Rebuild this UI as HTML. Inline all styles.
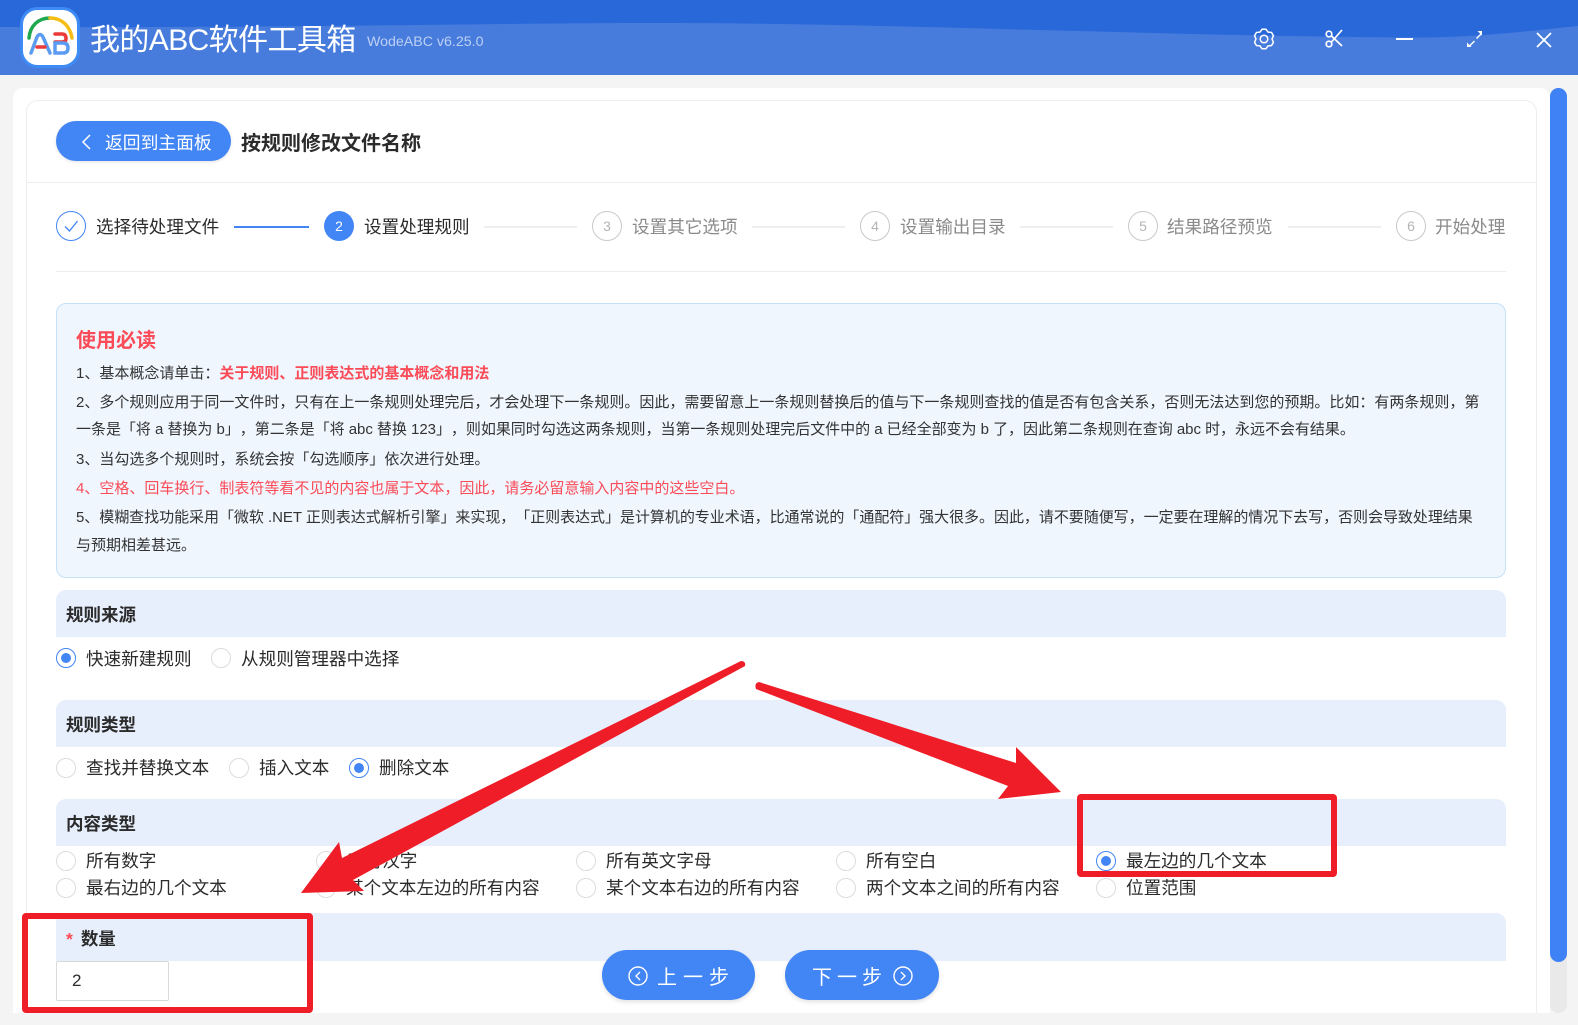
<!DOCTYPE html>
<html lang="zh"><head><meta charset="utf-8"><style>
*{box-sizing:border-box;margin:0;padding:0}
html,body{width:1578px;height:1025px;overflow:hidden;background:#f4f4f4;font-family:"Liberation Sans","Noto Sans CJK SC",sans-serif;color:#2b2b2b;text-spacing-trim:space-all}
.a{position:absolute;white-space:nowrap}
.t{position:absolute;white-space:nowrap;line-height:24px;height:24px}
.s{font-size:17.6px}
.n{font-size:15px;color:#333}
.g{color:#8a8a8a}
.r{position:absolute;width:20px;height:20px;border-radius:50%;border:1px solid #dcdcdc;background:#fff}
.r.on{border:1px solid #4285f4}
.r.on:after{content:"";position:absolute;left:4px;top:4px;width:10px;height:10px;border-radius:50%;background:#4285f4}
.bar{position:absolute;left:56px;width:1450px;background:#e7effc;border-radius:10px 10px 0 0}
.bt{position:absolute;left:66px;font-size:17.5px;font-weight:700;line-height:24px;white-space:nowrap;color:#2b2b2b}
.c{position:absolute;top:211px;width:30px;height:30px;border-radius:50%;border:1px solid #c9c9c9;color:#b5b5b5;font-size:14px;line-height:28px;text-align:center}
.l{position:absolute;top:226px;height:2px;width:93px;background:#eeeeee}
.btn{position:absolute;top:950px;height:50px;border-radius:25px;background:#4285f4;color:#fff;box-shadow:0 2px 4px rgba(0,0,0,.12)}
</style></head><body>
<svg class="a" style="left:0;top:0" width="1578" height="75" viewBox="0 0 1578 75"><rect width="1578" height="75" fill="#487cdc"/><path d="M0 0H1578V26C1520 32 1470 38 1400 37.500C1300 37 1150 33 1000 29C850 25 760 23 650 23C500 23 300 28 0 27Z" fill="#2968d8"/></svg>
<svg class="a" style="left:20px;top:7px" width="60" height="62" viewBox="0 0 60 62">
<rect x="1.500" y="1.500" width="57" height="58" rx="16" fill="#fff" stroke="#3f8bf5" stroke-width="3"/>
<path d="M9 31C10 19 18 11 30 11" fill="none" stroke="#1fa84f" stroke-width="3.500" stroke-linecap="round"/>
<path d="M30 11C42 11 50 19 52 31" fill="none" stroke="#f6bd16" stroke-width="3.500" stroke-linecap="round"/>
<path d="M11 46L17 30Q20 25 23 30L30 46" fill="none" stroke="#5b9bf2" stroke-width="3.500" stroke-linecap="round"/>
<path d="M17 40H25" stroke="#ea3a3a" stroke-width="3.500" stroke-linecap="round"/>
<path d="M35 27H42Q46 27 46 31.500Q46 35 42 35H35" fill="none" stroke="#ea3a3a" stroke-width="3.500" stroke-linecap="round"/>
<path d="M35 36H43Q48 36 48 41Q48 46 43 46H35Z" fill="none" stroke="#5b9bf2" stroke-width="3.500" stroke-linecap="round"/>
</svg>
<div class="a" style="left:90px;top:19px;font-size:30px;line-height:44px;color:#fff;letter-spacing:-.6px">我的ABC软件工具箱</div>
<div class="a" style="left:367px;top:32px;font-size:14.200px;line-height:20px;color:#bcd0f3">WodeABC v6.25.0</div>
<svg class="a" style="left:1249px;top:24px" width="30" height="30" viewBox="0 0 30 30" fill="none" stroke="#fff" stroke-width="1.500" stroke-linejoin="round"><path d="M13.100 5.200H16.900L19 8.070L22.550 8.440L24.450 11.740L23 15L24.450 18.260L22.550 21.560L19 21.930L16.900 24.800H13.100L11 21.930L7.450 21.560L5.550 18.260L7 15L5.550 11.740L7.450 8.440L11 8.070Z"/><circle cx="15" cy="15" r="3.800"/></svg>
<svg class="a" style="left:1320px;top:24px" width="30" height="30" viewBox="0 0 30 30" fill="none" stroke="#fff" stroke-width="1.700"><circle cx="9" cy="10" r="2.800"/><circle cx="9" cy="20" r="2.800"/><path d="M11.500 12L22 22M11.500 18L22 6"/></svg>
<div class="a" style="left:1396px;top:38px;width:17px;height:2px;background:#fff"></div>
<svg class="a" style="left:1460px;top:24px" width="30" height="30" viewBox="0 0 30 30" fill="#fff"><path d="M8.500 22L14 16.500L15 17.500L9.500 23Z M16 14L21 9L22 10L17 15Z M7 23V18.500L11.500 23Z M22 7V11.500L17.500 7Z"/></svg>
<svg class="a" style="left:1529px;top:24px" width="30" height="30" viewBox="0 0 30 30" stroke="#fff" stroke-width="1.800"><path d="M8 9L22 23M22 9L8 23"/></svg>

<div class="a" style="left:13px;top:88px;width:1537px;height:925px;background:#fff;border-radius:10px 10px 0 0;overflow:hidden"><div class="a" style="left:13px;top:12px;width:1511px;height:960px;background:#fff;border:1px solid #eeeeee;border-radius:12px"></div></div>
<div class="a" style="left:1550px;top:88px;width:17px;height:925px;background:#e9e9e9;border-radius:9px"></div>
<div class="a" style="left:1550px;top:88px;width:17px;height:874px;background:#3e82f5;border-radius:9px"></div>

<div class="btn" style="left:56px;top:121px;width:175px;height:40px;border-radius:20px;box-shadow:0 1px 3px rgba(0,0,0,.12)"></div>
<svg class="a" style="left:77px;top:131px" width="20" height="20" fill="none" stroke="#fff" stroke-width="1.500"><path d="M13 4L6 11L13 18"/></svg>
<div class="t" style="left:105px;top:131px;font-size:17.800px;color:#fff">返回到主面板</div>
<div class="t" style="left:241px;top:132px;font-size:20px;font-weight:700;color:#2b2b2b;line-height:24px">按规则修改文件名称</div>
<div class="a" style="left:27px;top:182px;width:1509px;height:1px;background:#ededed"></div>

<div class="a" style="left:56px;top:211px;width:30px;height:30px;border-radius:50%;border:1px solid #4285f4"></div>
<svg class="a" style="left:56px;top:211px" width="30" height="30" fill="none" stroke="#4285f4" stroke-width="1.300"><path d="M9 15.500L13.500 20L21.500 10"/></svg>
<div class="t s" style="left:96px;top:215px">选择待处理文件</div>
<div class="l" style="left:234px;width:75px;top:226px;background:#4285f4"></div>
<div class="c" style="left:324px;border:0;background:#4285f4;color:#fff;line-height:30px">2</div>
<div class="t s" style="left:364px;top:215px">设置处理规则</div>
<div class="l" style="left:484px"></div>
<div class="c" style="left:592px">3</div>
<div class="t s g" style="left:632px;top:215px">设置其它选项</div>
<div class="l" style="left:752px"></div>
<div class="c" style="left:860px">4</div>
<div class="t s g" style="left:900px;top:215px">设置输出目录</div>
<div class="l" style="left:1020px"></div>
<div class="c" style="left:1128px">5</div>
<div class="t s g" style="left:1167px;top:215px">结果路径预览</div>
<div class="l" style="left:1288px"></div>
<div class="c" style="left:1396px">6</div>
<div class="t s g" style="left:1435px;top:215px">开始处理</div>
<div class="a" style="left:56px;top:271px;width:1450px;height:1px;background:#ededed"></div>

<div class="a" style="left:56px;top:303px;width:1450px;height:275px;background:#eff6fe;border:1px solid #c6e0f8;border-radius:10px"></div>
<div class="t" style="left:76px;top:329px;font-size:20px;font-weight:700;color:#fa4b57">使用必读</div>
<div class="t n" style="left:76px;top:362px">1、基本概念请单击：<b style="color:#fa4b57">关于规则、正则表达式的基本概念和用法</b></div>
<div class="t n" style="left:76px;top:391px">2、多个规则应用于同一文件时，只有在上一条规则处理完后，才会处理下一条规则。因此，需要留意上一条规则替换后的值与下一条规则查找的值是否有包含关系，否则无法达到您的预期。比如：有两条规则，第</div>
<div class="t n" style="left:76px;top:418px;letter-spacing:-.03px">一条是「将 a 替换为 b」，第二条是「将 abc 替换 123」，则如果同时勾选这两条规则，当第一条规则处理完后文件中的 a 已经全部变为 b 了，因此第二条规则在查询 abc 时，永远不会有结果。</div>
<div class="t n" style="left:76px;top:448px">3、当勾选多个规则时，系统会按「勾选顺序」依次进行处理。</div>
<div class="t n" style="left:76px;top:477px;color:#fa4b57">4、空格、回车换行、制表符等看不见的内容也属于文本，因此，请务必留意输入内容中的这些空白。</div>
<div class="t n" style="left:76px;top:506px;letter-spacing:-.04px">5、模糊查找功能采用「微软 .NET 正则表达式解析引擎」来实现，「正则表达式」是计算机的专业术语，比通常说的「通配符」强大很多。因此，请不要随便写，一定要在理解的情况下去写，否则会导致处理结果</div>
<div class="t n" style="left:76px;top:534px">与预期相差甚远。</div>

<div class="bar" style="top:590px;height:47px"></div>
<div class="bt" style="top:603px">规则来源</div>
<div class="r on" style="left:56px;top:648px"></div>
<div class="t s" style="left:86px;top:647px">快速新建规则</div>
<div class="r" style="left:211px;top:648px"></div>
<div class="t s" style="left:241px;top:647px">从规则管理器中选择</div>

<div class="bar" style="top:700px;height:47px"></div>
<div class="bt" style="top:713px">规则类型</div>
<div class="r" style="left:56px;top:758px"></div>
<div class="t s" style="left:86px;top:756px">查找并替换文本</div>
<div class="r" style="left:229px;top:758px"></div>
<div class="t s" style="left:259px;top:756px">插入文本</div>
<div class="r on" style="left:349px;top:758px"></div>
<div class="t s" style="left:379px;top:756px">删除文本</div>

<div class="bar" style="top:799px;height:47px"></div>
<div class="bt" style="top:812px">内容类型</div>
<div class="r" style="left:56px;top:851px"></div><div class="t s" style="left:86px;top:849px">所有数字</div>
<div class="r" style="left:316px;top:851px"></div><div class="t s" style="left:347px;top:849px">所有汉字</div>
<div class="r" style="left:576px;top:851px"></div><div class="t s" style="left:606px;top:849px">所有英文字母</div>
<div class="r" style="left:836px;top:851px"></div><div class="t s" style="left:866px;top:849px">所有空白</div>
<div class="r on" style="left:1096px;top:851px"></div><div class="t s" style="left:1126px;top:849px">最左边的几个文本</div>
<div class="r" style="left:56px;top:878px"></div><div class="t s" style="left:86px;top:876px">最右边的几个文本</div>
<div class="r" style="left:316px;top:878px"></div><div class="t s" style="left:346px;top:876px">某个文本左边的所有内容</div>
<div class="r" style="left:576px;top:878px"></div><div class="t s" style="left:606px;top:876px">某个文本右边的所有内容</div>
<div class="r" style="left:836px;top:878px"></div><div class="t s" style="left:866px;top:876px">两个文本之间的所有内容</div>
<div class="r" style="left:1096px;top:878px"></div><div class="t s" style="left:1126px;top:876px">位置范围</div>

<div class="bar" style="top:913px;height:48px"></div>
<div class="bt" style="top:927px"><span style="color:#fa4b57;margin-right:8px">*</span>数量</div>
<div class="a" style="left:56px;top:961px;width:113px;height:40px;background:#fff;border:1px solid #d9d9d9;border-radius:2px;font-size:17px;line-height:38px;padding-left:15px">2</div>

<div class="btn" style="left:602px;width:153px"></div>
<svg class="a" style="left:627px;top:965px" width="22" height="22" fill="none" stroke="#fff" stroke-width="1.400"><circle cx="11" cy="11" r="9"/><path d="M13 7L9 11L13 15"/></svg>
<div class="t" style="left:657px;top:966px;font-size:20px;color:#fff;letter-spacing:6px">上一步</div>
<div class="btn" style="left:785px;width:154px"></div>
<div class="t" style="left:812px;top:966px;font-size:20px;color:#fff;letter-spacing:5px">下一步</div>
<svg class="a" style="left:892px;top:965px" width="22" height="22" fill="none" stroke="#fff" stroke-width="1.400"><circle cx="11" cy="11" r="9"/><path d="M9 7L13 11L9 15"/></svg>

<svg class="a" style="left:0;top:0" width="1578" height="1025" viewBox="0 0 1578 1025">
<path d="M741 661Q746 661 745 666L353 880L364 891L301 893L339 842L342 858Z" fill="#ef1d27"/>
<path d="M759 682L1016 763V747L1061 792L998 799L1008 786L756 689Q754 683 759 682Z" fill="#ef1d27"/>
<rect x="1080" y="797" width="254" height="77" fill="none" stroke="#ef1d27" stroke-width="6" rx="1"/>
<rect x="25" y="916" width="285" height="94" fill="none" stroke="#ef1d27" stroke-width="6" rx="1"/>
</svg>
</body></html>
